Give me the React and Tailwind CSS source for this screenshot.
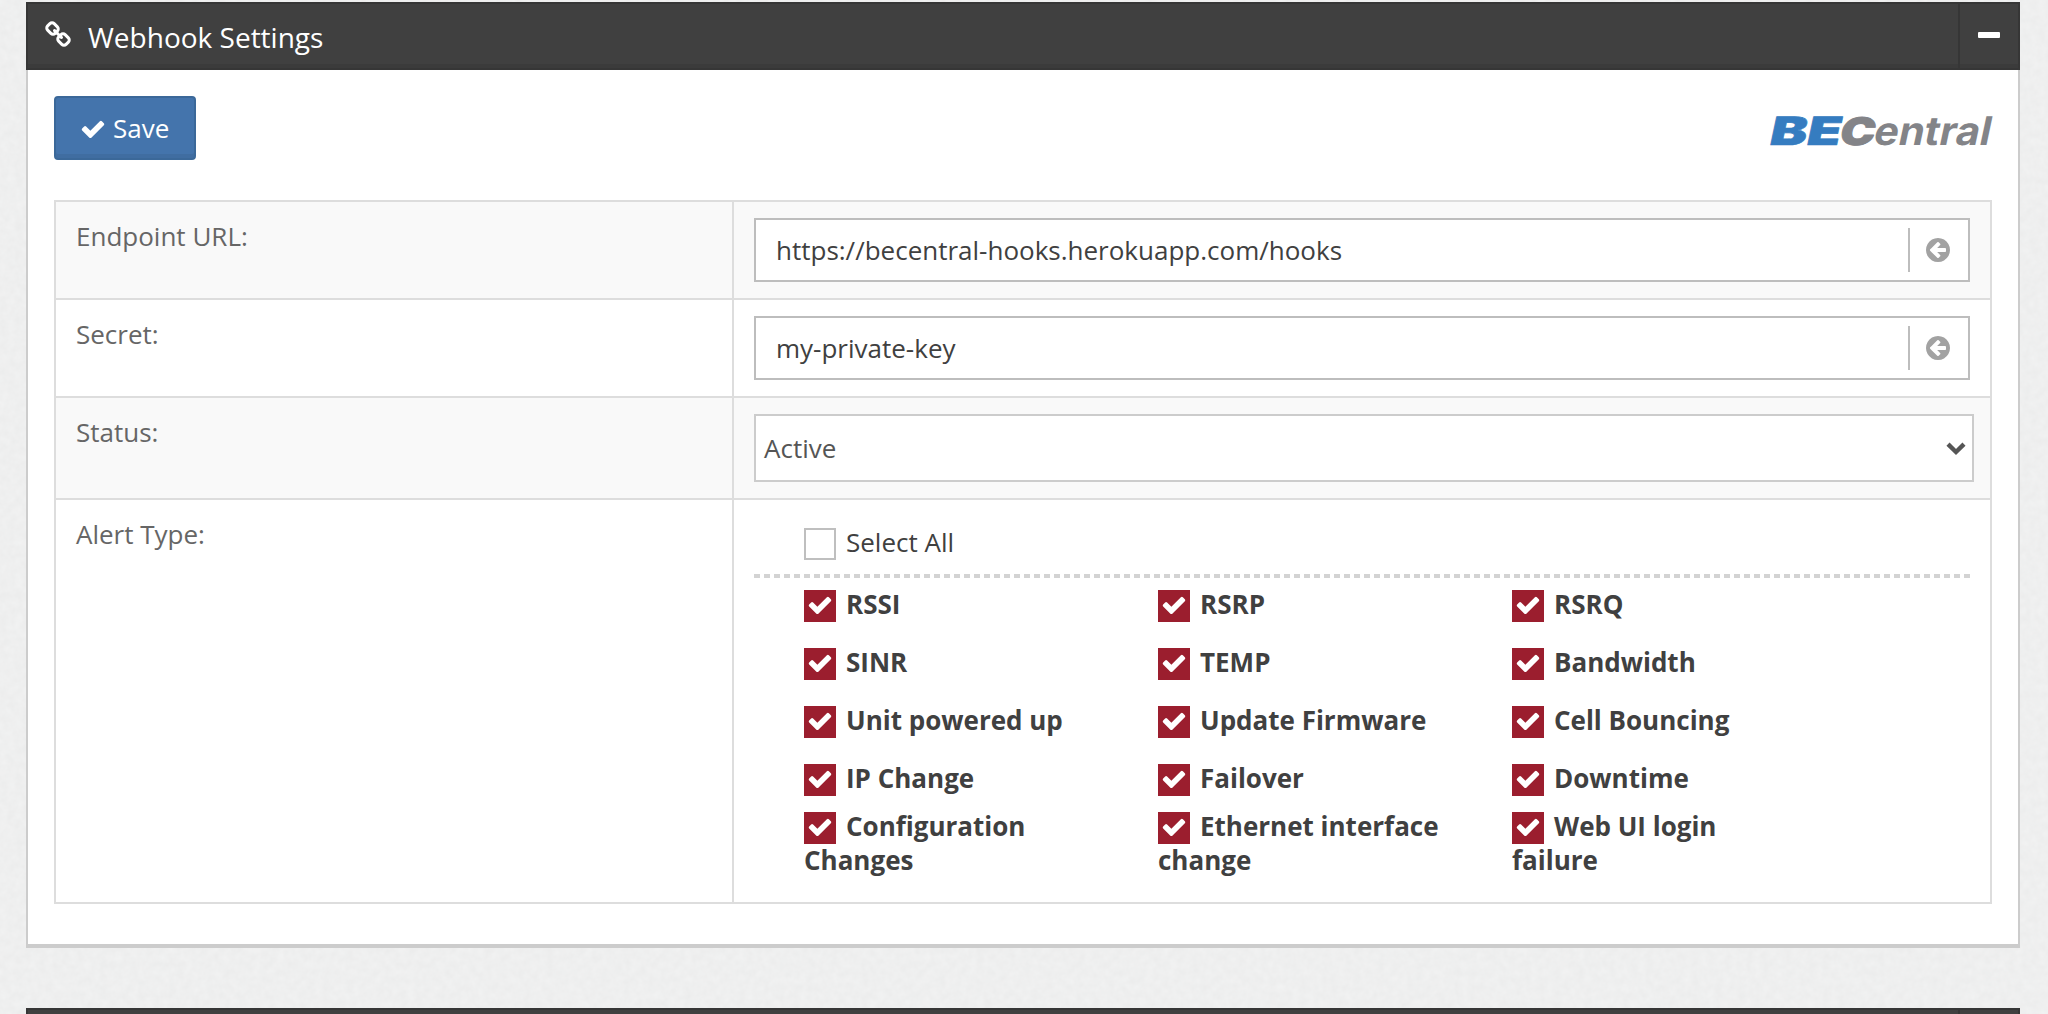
import React from "react";

const ICONS = {
  check:
    "M1671 566q0 40-28 68l-724 724-136 136q-28 28-68 28t-68-28l-136-136-362-362q-28-28-28-68t28-68l136-136q28-28 68-28t68 28l294 295 656-657q28-28 68-28t68 28l136 136q28 28 28 68z",
  arrowCircleLeft:
    "M1408 960v-128q0-26-19-45t-45-19h-502l189-189q19-19 19-45t-19-45l-91-91q-18-18-45-18t-45 18l-362 362-91 91q-18 18-18 45t18 45l91 91 362 362q18 18 45 18t45-18l91-91q18-18 18-45t-18-45l-189-189h502q26 0 45-19t19-45zm256-64q0 209-103 385.5t-279.5 279.5-385.5 103-385.5-103-279.5-279.5-103-385.5 103-385.5 279.5-279.5 385.5-103 385.5 103 279.5 279.5 103 385.5z",
  link:
    "M1520 1216q0-40-28-68l-208-208q-28-28-68-28-42 0-72 32 3 3 19 18.5t21.5 21.5 15 19 13 25.5 3.5 27.5q0 40-28 68t-68 28q-15 0-27.5-3.5t-25.5-13-19-15-21.5-21.5-18.5-19q-33 31-33 73 0 40 28 68l206 207q27 27 68 27 40 0 68-26l147-146q28-28 28-67zm-703-705q0-40-28-68l-206-207q-28-28-68-28-39 0-68 27l-147 146q-28 28-28 67 0 40 28 68l208 208q27 27 68 27 42 0 72-31-3-3-19-18.5t-21.5-21.5-15-19-13-25.5-3.5-27.5q0-40 28-68t68-28q15 0 27.5 3.5t25.5 13 19 15 21.5 21.5 18.5 19q33-31 33-73zm895 705q0 120-85 203l-147 146q-83 83-203 83-121 0-204-85l-206-207q-83-83-83-203 0-123 88-209l-88-88q-86 88-208 88-120 0-204-84l-208-208q-84-84-84-204t85-203l147-146q83-83 203-83 121 0 204 85l206 207q83 83 83 203 0 123-88 209l88 88q86-88 208-88 120 0 204 84l208 208q84 84 84 204z",
};

function Icon({ name, className }) {
  return (
    <svg viewBox="0 0 1792 1792" className={className} fill="currentColor" aria-hidden="true">
      <path d={ICONS[name]} />
    </svg>
  );
}

function Grain() {
  return (
    <svg className="pointer-events-none absolute inset-0 h-full w-full" aria-hidden="true">
      <filter id="grain" x="0" y="0" width="100%" height="100%" colorInterpolationFilters="sRGB">
        <feTurbulence type="fractalNoise" baseFrequency="0.13" numOctaves="3" seed="4" />
        <feColorMatrix values="0.03 0 0 0 0.92  0.03 0 0 0 0.922  0.03 0 0 0 0.922  0 0 0 0 1" />
      </filter>
      <rect width="100%" height="100%" filter="url(#grain)" />
    </svg>
  );
}

function Logo() {
  return (
    <svg width="224" height="50" viewBox="0 -8 224 50" className="block overflow-visible" aria-label="BECentral">
      <g fontFamily="Inter, sans-serif" transform="translate(1 31) skewX(-12)" strokeLinejoin="round">
        <text x="-1" y="0" fontSize="39" fontWeight="900" fill="#357cc0" stroke="#357cc0" strokeWidth="0.6" textLength="71" lengthAdjust="spacingAndGlyphs">
          BE
        </text>
        <text x="69" y="0" fontSize="38" fontWeight="900" fill="#838488" stroke="#838488" strokeWidth="0.8" textLength="35" lengthAdjust="spacingAndGlyphs">
          C
        </text>
        <text x="103" y="0" fontSize="39.5" fontWeight="700" fill="#838488" textLength="117" lengthAdjust="spacingAndGlyphs">
          entral
        </text>
      </g>
    </svg>
  );
}

function PanelHeader({ children }) {
  return (
    <header className="flex h-[68px] border-2 border-[#363636] bg-[#404040] text-white shadow-[inset_0_-4px_0_rgba(0,0,0,0.08)]">
      {children}
    </header>
  );
}

function Row({ label, striped, className, children }) {
  return (
    <div className={`grid grid-cols-[678px_1fr] border-b-2 border-[#dddddd] ${striped ? "bg-[#f9f9f9]" : "bg-white"} ${className}`}>
      <div className="border-r-2 border-[#dddddd] px-5 pt-4 leading-9 text-[#666666]">{label}</div>
      <div className="px-5 pt-4">{children}</div>
    </div>
  );
}

function TextField({ value }) {
  return (
    <div className="flex h-16 items-center border-2 border-[#bdbdbd] bg-white pl-5 text-[#404040]">
      <span className="grow leading-9">{value}</span>
      <span className="flex h-11 w-[60px] items-center border-l-2 border-[#bdbdbd] pl-3.5 text-[#a2a2a2]">
        <Icon name="arrowCircleLeft" className="size-7" />
      </span>
    </div>
  );
}

function Checked({ children }) {
  return (
    <label className="block pr-16 leading-8 font-bold text-[#404040]">
      <span className="mr-2.5 inline-block h-8 w-8 bg-[#9b1e2e] pt-0.5 pl-[3px] align-[-8px] text-white">
        <Icon name="check" className="size-[26px]" />
      </span>
      {children}
    </label>
  );
}

const ALERTS = [
  "RSSI", "RSRP", "RSRQ",
  "SINR", "TEMP", "Bandwidth",
  "Unit powered up", "Update Firmware", "Cell Bouncing",
  "IP Change", "Failover", "Downtime",
  "Configuration Changes", "Ethernet interface change", "Web UI login failure",
];

export default function App() {
  return (
    <div className="relative h-[1014px] w-[2048px] overflow-hidden bg-[#eeefef] font-['Open_Sans',sans-serif] text-[26px]">
      <Grain />
      <main className="relative pt-0.5 pr-7 pl-[26px]">
        <section>
          <PanelHeader>
            <Icon name="link" className="mt-[17px] ml-4 size-7" />
            <h2 className="ml-4 grow pt-3.5 text-[28px] leading-[38px]">Webhook Settings</h2>
            <button className="flex w-[60px] border-l-2 border-[#363636] pt-7 pl-[18px]" aria-label="Collapse">
              <span className="h-1.5 w-[22px] rounded-[1px] bg-white" />
            </button>
          </PanelHeader>

          <div className="h-[878px] border-x-2 border-b-4 border-[#cccccc] bg-white px-[26px] pt-[26px]">
            <div className="flex h-[104px] items-start justify-between">
              <button className="flex h-16 w-[142px] rounded-[4px] border-2 border-[#3b6899] bg-[#4474ac] pt-3 pl-6 leading-9 text-white shadow-[inset_0_-4px_0_rgba(0,0,0,0.06)]">
                <Icon name="check" className="mt-1.5 size-[26px]" />
                <span className="ml-[7px]">Save</span>
              </button>
              <div className="mt-2.5">
                <Logo />
              </div>
            </div>

            <div className="border-2 border-b-0 border-[#dddddd]">
              <Row label="Endpoint URL:" striped className="h-[98px]">
                <TextField value="https://becentral-hooks.herokuapp.com/hooks" />
              </Row>
              <Row label="Secret:" className="h-[98px]">
                <TextField value="my-private-key" />
              </Row>
              <Row label="Status:" striped className="h-[102px]">
                <div className="-mr-1 flex h-[68px] items-center justify-between border-2 border-[#cccccc] bg-white pr-1.5 pl-2 text-[#555555]">
                  <span className="leading-9">Active</span>
                  <svg width="20" height="14" viewBox="0 0 20 14" className="mt-0.5" fill="none" stroke="#555555" strokeWidth="4.4" aria-hidden="true">
                    <path d="M2 2.2 10 10l8-7.8" />
                  </svg>
                </div>
              </Row>
              <Row label="Alert Type:" className="h-[404px]">
                <div className="flex h-[58px] pt-3 pl-[50px] text-[#404040]">
                  <span className="mr-2.5 size-8 border-2 border-[#bfbfbf] bg-white" />
                  <span className="-mt-1 leading-9">Select All</span>
                </div>
                <div className="h-1 bg-[repeating-linear-gradient(90deg,#d3d3d3_0_6px,transparent_6px_10px)]" />
                <div className="grid grid-cols-[354px_354px_354px] grid-rows-[58px_58px_58px_48px_68px] pt-2.5 pl-[50px]">
                  {ALERTS.map((name) => (
                    <Checked key={name}>{name}</Checked>
                  ))}
                </div>
              </Row>
            </div>
          </div>
        </section>

        <section className="mt-[60px]">
          <PanelHeader>
            <span className="grow" />
            <span className="w-[60px] border-l-2 border-[#363636]" />
          </PanelHeader>
        </section>
      </main>
    </div>
  );
}
